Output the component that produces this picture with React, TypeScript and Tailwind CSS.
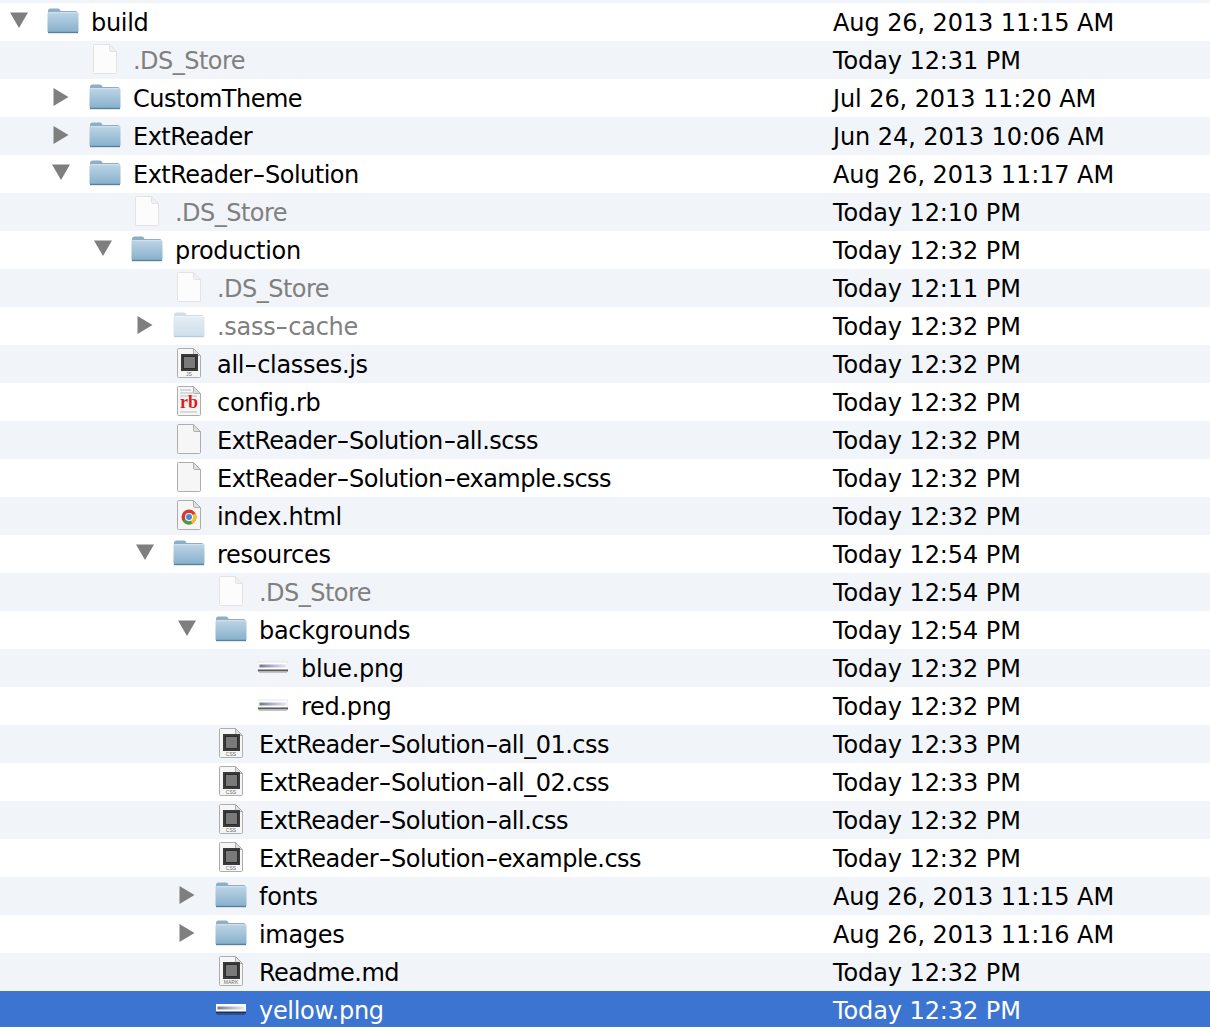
import type { ReactNode } from "react";

type Kind = "folder" | "blank" | "doc" | "rb" | "chrome" | "png";

type Row = {
  name: string;
  date: string;
  level: number;
  kind: Kind;
  arrow?: "open" | "closed";
  dim?: boolean;
  tag?: string;
  selected?: boolean;
};

const rows: Row[] = [
  { name: "build", date: "Aug 26, 2013 11:15 AM", level: 0, kind: "folder", arrow: "open" },
  { name: ".DS_Store", date: "Today 12:31 PM", level: 1, kind: "blank", dim: true },
  { name: "CustomTheme", date: "Jul 26, 2013 11:20 AM", level: 1, kind: "folder", arrow: "closed" },
  { name: "ExtReader", date: "Jun 24, 2013 10:06 AM", level: 1, kind: "folder", arrow: "closed" },
  { name: "ExtReader-Solution", date: "Aug 26, 2013 11:17 AM", level: 1, kind: "folder", arrow: "open" },
  { name: ".DS_Store", date: "Today 12:10 PM", level: 2, kind: "blank", dim: true },
  { name: "production", date: "Today 12:32 PM", level: 2, kind: "folder", arrow: "open" },
  { name: ".DS_Store", date: "Today 12:11 PM", level: 3, kind: "blank", dim: true },
  { name: ".sass-cache", date: "Today 12:32 PM", level: 3, kind: "folder", arrow: "closed", dim: true },
  { name: "all-classes.js", date: "Today 12:32 PM", level: 3, kind: "doc", tag: "JS" },
  { name: "config.rb", date: "Today 12:32 PM", level: 3, kind: "rb" },
  { name: "ExtReader-Solution-all.scss", date: "Today 12:32 PM", level: 3, kind: "blank" },
  { name: "ExtReader-Solution-example.scss", date: "Today 12:32 PM", level: 3, kind: "blank" },
  { name: "index.html", date: "Today 12:32 PM", level: 3, kind: "chrome" },
  { name: "resources", date: "Today 12:54 PM", level: 3, kind: "folder", arrow: "open" },
  { name: ".DS_Store", date: "Today 12:54 PM", level: 4, kind: "blank", dim: true },
  { name: "backgrounds", date: "Today 12:54 PM", level: 4, kind: "folder", arrow: "open" },
  { name: "blue.png", date: "Today 12:32 PM", level: 5, kind: "png" },
  { name: "red.png", date: "Today 12:32 PM", level: 5, kind: "png" },
  { name: "ExtReader-Solution-all_01.css", date: "Today 12:33 PM", level: 4, kind: "doc", tag: "CSS" },
  { name: "ExtReader-Solution-all_02.css", date: "Today 12:33 PM", level: 4, kind: "doc", tag: "CSS" },
  { name: "ExtReader-Solution-all.css", date: "Today 12:32 PM", level: 4, kind: "doc", tag: "CSS" },
  { name: "ExtReader-Solution-example.css", date: "Today 12:32 PM", level: 4, kind: "doc", tag: "CSS" },
  { name: "fonts", date: "Aug 26, 2013 11:15 AM", level: 4, kind: "folder", arrow: "closed" },
  { name: "images", date: "Aug 26, 2013 11:16 AM", level: 4, kind: "folder", arrow: "closed" },
  { name: "Readme.md", date: "Today 12:32 PM", level: 4, kind: "doc", tag: "MARK" },
  { name: "yellow.png", date: "Today 12:32 PM", level: 4, kind: "png", selected: true },
];

function Arrow({ dir }: { dir: "open" | "closed" }) {
  return (
    <svg width="18" height="18" viewBox="0 0 18 18" className="block">
      {dir === "open" ? <path d="M0 .5h18L9 16z" fill="#7f7f7f" /> : <path d="M1.500 0l15 9-15 9z" fill="#7f7f7f" />}
    </svg>
  );
}

function FolderIcon({ dim }: { dim?: boolean }) {
  return (
    <svg width="32" height="26" viewBox="0 0 32 26" className={dim ? "block opacity-40" : "block"}>
      <defs>
        <linearGradient id="folderBody" x1="0" y1="0" x2="0" y2="1">
          <stop offset="0" stopColor="#bcd5e6" />
          <stop offset="1" stopColor="#86afcb" />
        </linearGradient>
      </defs>
      <path d="M1 3C1 1.500 2 .5 3.500 .5h7.500c1.200 0 2 .8 2.500 2.500h15C30 3 31 4 31 5.500V8H1z" fill="#8dafc5" />
      <path d="M.5 6C.5 4.800 1.300 4 2.500 4h27C30.700 4 31.500 4.800 31.500 6v17c0 1.200-.8 2-2 2h-27c-1.200 0-2-.8-2-2z" fill="url(#folderBody)" />
      <path d="M1 24.500h30" stroke="#55819f" strokeWidth="1.400" />
      <path d="M1.500 4.700h29" stroke="#d5e3ed" strokeWidth="1" />
    </svg>
  );
}

function SheetIcon({ dim, children }: { dim?: boolean; children?: ReactNode }) {
  const border = dim ? "#e3e3e3" : "#adadad";
  return (
    <svg width="26" height="32" viewBox="0 0 26 32" className="block">
      <path d="M2.500 1.500h15l7 7v21c0 .6-.4 1-1 1h-21c-.6 0-1-.4-1-1v-27c0-.6.4-1 1-1z" fill={dim ? "#fcfcfc" : "#f6f6f6"} stroke={border} />
      <path d="M17.500 1.500v6c0 .6.400 1 1 1h6z" fill={dim ? "#f1f1f1" : "#dedede"} stroke={border} />
      {children}
    </svg>
  );
}

function FileIcon({ row }: { row: Row }) {
  if (row.kind === "png") {
    return (
      <svg width="30" height="14" viewBox="0 0 30 14" className="ml-[-2px] block blur-[0.4px]">
        <defs>
          <linearGradient id="pngStrip" x1="0" y1="0" x2="1" y2="0">
            <stop offset="0" stopColor="#6f7690" />
            <stop offset="0.5" stopColor="#aeb7d0" />
            <stop offset="1" stopColor="#e6e8f0" />
          </linearGradient>
        </defs>
        <rect x="0" y="2" width="30" height="8" fill="#ffffff" stroke={row.selected ? "none" : "#d8d8d8"} strokeWidth="0.600" />
        <rect x="1.500" y="4.500" width="27" height="3" fill="url(#pngStrip)" />
        <rect x="0" y="9.500" width="30" height="2" fill={row.selected ? "#17305f" : "#5a5a5a"} />
        <rect x="1" y="11.500" width="28" height="1.500" fill={row.selected ? "#2c5296" : "#c4c4c4"} />
      </svg>
    );
  }
  if (row.kind === "doc") {
    return (
      <SheetIcon>
        <rect x="5" y="7" width="17" height="17" fill="#3a3a3a" />
        <rect x="7.500" y="9.500" width="12" height="12" fill="#7a7a7a" stroke="#222222" strokeWidth="0.800" />
        <text x="13" y="29" textAnchor="middle" fontSize="5" fill="#6b6b6b" fontFamily="Liberation Sans, sans-serif">
          {row.tag}
        </text>
      </SheetIcon>
    );
  }
  if (row.kind === "rb") {
    return (
      <SheetIcon>
        <path d="M4 5h11M4 8h13M4 11h17M4 27h17" stroke="#cfcfcf" strokeWidth="1.300" />
        <text x="13" y="23" textAnchor="middle" fontSize="18" fontWeight="700" fill="#dd1c1c" fontFamily="Liberation Serif, serif">
          rb
        </text>
      </SheetIcon>
    );
  }
  if (row.kind === "chrome") {
    return (
      <SheetIcon>
        <circle cx="13" cy="18" r="7.500" fill="#d9392b" />
        <path d="M13 18L6.500 21.750A7.500 7.500 0 0 0 16.200 24.800z" fill="#4a9e45" />
        <path d="M13 18L16.200 24.800A7.500 7.500 0 0 0 19.500 14.250z" fill="#f2c22e" />
        <circle cx="13" cy="18" r="4" fill="#ffffff" />
        <circle cx="13" cy="18" r="3" fill="#4b86d8" />
      </SheetIcon>
    );
  }
  return <SheetIcon dim={row.dim} />;
}

// the hyphen in the original font is about twice as wide as DejaVu's
function FileName({ name }: { name: string }) {
  const parts = name.split("-");
  return (
    <>
      {parts.map((part, i) => (
        <span key={i}>
          {i > 0 && <span className="inline-block w-[13px] scale-x-150 text-center">-</span>}
          {part}
        </span>
      ))}
    </>
  );
}

function FinderRow({ row, index }: { row: Row; index: number }) {
  const stripe = index % 2 === 1 ? "bg-[#f1f5fa]" : "bg-white";
  const textColor = row.selected ? "text-white" : "text-black";
  // capitals run wider in DejaVu than in the original font
  const tracking = /[A-Z]/.test(row.name) ? "tracking-[-0.52px]" : "tracking-[-0.3px]";
  return (
    <div className={row.selected ? "h-[36px] bg-[#3b75d1]" : `h-[38px] ${stripe}`}>
      <div className="flex h-[38px] items-center pt-[2px]">
        <div className="flex w-[833px] shrink-0 items-center" style={{ paddingLeft: row.level * 42 }}>
          <div className="flex w-[47px] shrink-0 justify-start pb-[5px] pl-[10px]">
            {row.arrow && <Arrow dir={row.arrow} />}
          </div>
          <div className={`flex w-[44px] shrink-0 items-center pb-[5px] ${row.kind === "folder" ? "" : "pl-[3px]"}`}>
            {row.kind === "folder" ? <FolderIcon dim={row.dim} /> : <FileIcon row={row} />}
          </div>
          <span className={`whitespace-nowrap ${tracking} ${row.dim ? "text-[#808080]" : textColor}`}>
            <FileName name={row.name} />
          </span>
        </div>
        <span className={`whitespace-nowrap tracking-[-0.09px] ${textColor}`}>{row.date}</span>
      </div>
    </div>
  );
}

export default function App() {
  return (
    <div className="h-[1030px] w-[1210px] overflow-hidden bg-white pt-[3px] font-['DejaVu_Sans',sans-serif] text-[24px] leading-[36px] [background-image:linear-gradient(#f1f5fa_3px,transparent_3px)]">
      {rows.map((row, i) => (
        <FinderRow key={`${row.name}-${i}`} row={row} index={i} />
      ))}
    </div>
  );
}
